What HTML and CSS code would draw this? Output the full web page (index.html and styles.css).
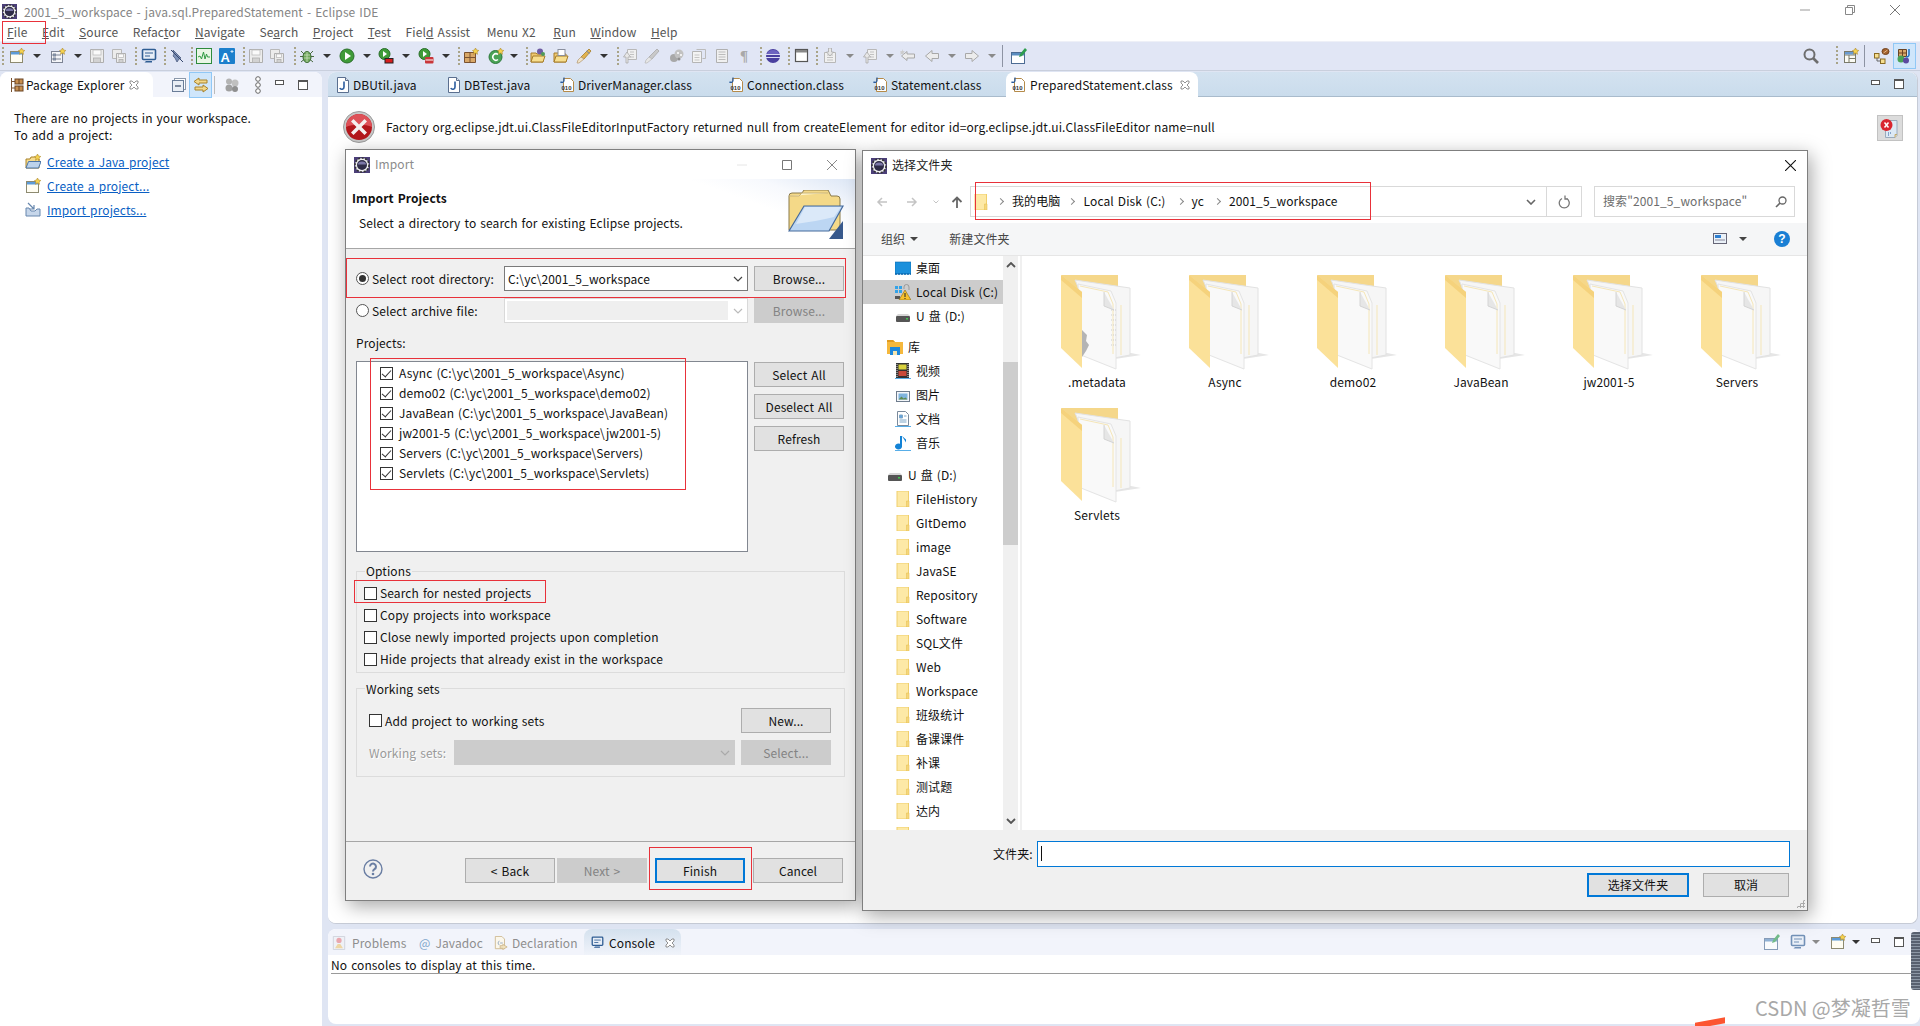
FILE: index.html
```html
<!DOCTYPE html>
<html lang="zh-CN">
<head>
<meta charset="utf-8">
<title>2001_5_workspace - java.sql.PreparedStatement - Eclipse IDE</title>
<link rel="stylesheet" href="styles.css">
</head>
<body>
<svg class="sprite" width="0" height="0">
<defs>
<symbol id="ecl" viewBox="0 0 16 16"><rect width="16" height="16" fill="#4b3f78"/><circle cx="8" cy="8" r="7" fill="#f0f0f0"/><circle cx="8" cy="8" r="7" fill="none" stroke="#333" stroke-width="1.6" stroke-dasharray="2 1.6"/><circle cx="8" cy="8" r="5" fill="#2f2c47"/><path d="M4 7.5a4 3 0 0 1 8 0z" fill="#7c78a8"/></symbol>
<symbol id="new" viewBox="0 0 16 16"><rect x="1.5" y="3.5" width="12" height="11" fill="#fffdf2" stroke="#8d8a70"/><rect x="2" y="4" width="11" height="2.5" fill="#5d9bd8"/><path d="M12.5 0l1 2 2.300.5-1.800 1.500.5 2.300-2-1.200-2 1.200.5-2.300L9.500 2.500 11.500 2z" fill="#f5d34f" stroke="#b08a2a" stroke-width=".6"/></symbol>
<symbol id="newcls" viewBox="0 0 16 16"><rect x="1.500" y="3.500" width="11" height="11" fill="#f4f5f8" stroke="#7d8494"/><path d="M3 6h3v2H3zM7 7h4M3 10h3v2H3zM7 11h4" fill="#8aa0c0" stroke="#7d8494"/><path d="M12.500 0l1 2 2.300.5-1.800 1.500.5 2.300-2-1.200-2 1.200.5-2.300L9.500 2.500 11.500 2z" fill="#f5d34f" stroke="#b08a2a" stroke-width=".6"/></symbol>
<symbol id="save" viewBox="0 0 16 16"><path d="M1.500 1.500h13v13h-13z" fill="#ececec" stroke="#aeaeae"/><rect x="4" y="2" width="8" height="5" fill="#fafafa" stroke="#bdbdbd" stroke-width=".8"/><rect x="4.500" y="10" width="7" height="4.500" fill="#d2d2d2" stroke="#aeaeae" stroke-width=".8"/></symbol>
<symbol id="saveall" viewBox="0 0 16 16"><path d="M1.500 1.500h9v9h-9z" fill="#ececec" stroke="#b8b8b8"/><path d="M5.500 5.500h9v9h-9z" fill="#ececec" stroke="#aeaeae"/><rect x="7.500" y="6" width="5" height="3.500" fill="#fafafa" stroke="#bdbdbd" stroke-width=".8"/><rect x="8" y="11.500" width="4" height="3" fill="#d2d2d2" stroke="#aeaeae" stroke-width=".8"/></symbol>
<symbol id="mon" viewBox="0 0 16 16"><rect x="1.500" y="1.500" width="13" height="10" rx="1" fill="#e7eef7" stroke="#2f5d93" stroke-width="1.600"/><path d="M4 5h8M4 8h5" stroke="#2f5d93"/><path d="M5 13h6v1.500H3.500z" fill="#2f5d93"/></symbol>
<symbol id="pin" viewBox="0 0 16 16"><path d="M4 2l8 8-2 1-2 3-2-4-2-2 1-2z" fill="#7d90b6" stroke="#4a5b7e" stroke-width=".8"/><path d="M2 2l12 12" stroke="#34466c"/></symbol>
<symbol id="w" viewBox="0 0 16 16"><rect x=".5" y=".5" width="15" height="15" fill="#eaf6e6" stroke="#2e8b3d"/><path d="M2 9l2-1 1.500 3L7.500 4l1.500 7 1.500-5 1 3H14" fill="none" stroke="#2e9a42"/></symbol>
<symbol id="a" viewBox="0 0 16 16"><rect width="16" height="16" rx="1" fill="#1c7fcc"/><text x="1.500" y="13.500" class="svgA">A</text><path d="M13 2v3M11.500 3.500h3" stroke="#cfe6f8"/></symbol>
<symbol id="bug" viewBox="0 0 16 16"><path d="M2 3l3 3M14 3l-3 3M1 8.500h3M15 8.500h-3M2 14l3-2.500M14 14l-3-2.500" stroke="#4a6a42"/><ellipse cx="8" cy="9" rx="4" ry="5.500" fill="#6fa85b" stroke="#3e6b37"/><path d="M8 4v10M5 7h6M5 10h6" stroke="#d7e6c8" stroke-width=".7"/></symbol>
<symbol id="run" viewBox="0 0 16 16"><circle cx="8" cy="8" r="7" fill="#3f9b38" stroke="#2a6f2a"/><path d="M6 4l6 4-6 4z" fill="#fff"/></symbol>
<symbol id="runx" viewBox="0 0 16 16"><circle cx="6.500" cy="6" r="5.500" fill="#3f9b38" stroke="#2a6f2a"/><path d="M5 3l4 3-4 3z" fill="#fff"/><rect x="7" y="10.500" width="8" height="4.500" fill="#d81e1e" stroke="#222"/></symbol>
<symbol id="runr" viewBox="0 0 16 16"><circle cx="6.500" cy="6" r="5.500" fill="#3f9b38" stroke="#2a6f2a"/><path d="M5 3l4 3-4 3z" fill="#fff"/><rect x="7" y="9" width="8.500" height="6.500" rx="1" fill="#c9363a"/><path d="M7.500 12h7.500" stroke="#fff"/></symbol>
<symbol id="pkg" viewBox="0 0 16 16"><path d="M1.500 4.500h11v10h-11z" fill="#d9a868" stroke="#7a5230"/><path d="M1.500 9.500h11M7 4.500v10" stroke="#7a5230"/><path d="M12.500 0l1 2 2.300.5-1.800 1.500.5 2.300-2-1.200-2 1.200.5-2.300L9.500 2.500 11.500 2z" fill="#f5d34f" stroke="#b08a2a" stroke-width=".6"/></symbol>
<symbol id="newg" viewBox="0 0 16 16"><circle cx="7.500" cy="9" r="6.500" fill="#4aa356" stroke="#2d7a3b"/><path d="M10 6.500a3.200 3.200 0 1 0 0 5" fill="none" stroke="#fff" stroke-width="1.500"/><path d="M12.500 0l1 2 2.300.5-1.800 1.500.5 2.300-2-1.200-2 1.200.5-2.300L9.500 2.500 11.500 2z" fill="#f5d34f" stroke="#b08a2a" stroke-width=".6"/></symbol>
<symbol id="fo1" viewBox="0 0 16 16"><path d="M1 5h5l1 1h6v8H1z" fill="#eec870" stroke="#a67d2a"/><path d="M1 14l2-6h12l-2 6z" fill="#f7de8e" stroke="#a67d2a"/><circle cx="10" cy="3.500" r="3" fill="#6e5ca3"/><circle cx="13" cy="6" r="2" fill="#4f9a5a"/></symbol>
<symbol id="fo2" viewBox="0 0 16 16"><path d="M1 5h5l1 1h6v8H1z" fill="#eec870" stroke="#a67d2a"/><path d="M1 14l2-6h12l-2 6z" fill="#f7de8e" stroke="#a67d2a"/><rect x="5" y="1.500" width="7" height="6" fill="#fff" stroke="#8a8f9e"/></symbol>
<symbol id="pen" viewBox="0 0 16 16"><path d="M13 1l2 2-7 8-3-2z" fill="#e2b34f" stroke="#a67d2a" stroke-width=".8"/><path d="M5 9l3 2-5 4H1l1-3z" fill="#f1e3c8" stroke="#b79e78" stroke-width=".8"/><path d="M10.500 3l3 2.500" stroke="#6d88b8"/></symbol>
<symbol id="peng" viewBox="0 0 16 16"><path d="M13 1l2 2-7 8-3-2z" fill="#c9c9c9" stroke="#a8a8a8" stroke-width=".8"/><path d="M5 9l3 2-5 4H1l1-3z" fill="#e6e6e6" stroke="#bdbdbd" stroke-width=".8"/></symbol>
<symbol id="blob" viewBox="0 0 16 16"><circle cx="5" cy="10" r="4" fill="#a8a8a8"/><circle cx="10" cy="6" r="4.500" fill="#c2c2c2"/><circle cx="9" cy="5" r="1" fill="#fff"/><circle cx="12" cy="7" r="1" fill="#fff"/><circle cx="10" cy="11" r="1.500" fill="#8f8f8f"/></symbol>
<symbol id="d1" viewBox="0 0 16 16"><path d="M1.500 3.500h9v11h-9z" fill="#f3f3f3" stroke="#b5b5b5"/><path d="M5.500 1.500h9v9h-3" fill="none" stroke="#bbb"/><path d="M3.500 7h5M3.500 9.500h5M3.500 12h5" stroke="#c5c5c5"/></symbol>
<symbol id="d2" viewBox="0 0 16 16"><path d="M2.500 1.500h11v13h-11z" fill="#f0f0f0" stroke="#b0b0b0"/><path d="M4.500 4h7M4.500 6.500h7M4.500 9h7M4.500 11.500h7" stroke="#bcbcbc"/></symbol>
<symbol id="globe" viewBox="0 0 16 16"><circle cx="8" cy="8" r="7" fill="#4a3f9f"/><path d="M1 6.500h14M1 9.500h14" stroke="#dcdcf4"/><path d="M2 6a6 4 0 0 1 12 0z" fill="#6d63c0"/></symbol>
<symbol id="win" viewBox="0 0 16 16"><rect x="1.500" y="1.500" width="12" height="12" fill="#fff" stroke="#555" stroke-width="1.200"/><rect x="2" y="2" width="11" height="2.500" fill="#888"/></symbol>
<symbol id="dn" viewBox="0 0 16 16"><path d="M2.500 4.500h11v10h-11z" fill="#f0f0f0" stroke="#b8b8b8"/><path d="M5 7h6M5 9.500h6M5 12h6" stroke="#c2c2c2"/><path d="M6.500 0h3v4h2L8 8 4.500 4h2z" fill="#e8e8e8" stroke="#aaa" stroke-width=".8"/></symbol>
<symbol id="upd" viewBox="0 0 16 16"><path d="M5.500 1.500h9v10h-9z" fill="#f0f0f0" stroke="#b8b8b8"/><path d="M8 4h4M8 6.500h4M8 9h4" stroke="#c2c2c2"/><path d="M4 15V9H1.500L5 4l3.500 5H6v6z" fill="#e8e8e8" stroke="#aaa" stroke-width=".8"/></symbol>
<symbol id="lastedit" viewBox="0 0 16 16"><path d="M7 3.500L1.500 8 7 12.500V10h7.500V6H7z" fill="#ececec" stroke="#a8a8a8"/><path d="M2 1l1 2 2 .5-1.500 1.200.4 2-1.900-1-1.700 1 .4-2L0 3.500 2 3z" fill="#ccc"/></symbol>
<symbol id="left" viewBox="0 0 16 16"><path d="M8 2.500L1.500 8 8 13.500V10.500h6.500v-5H8z" fill="#ececec" stroke="#a8a8a8"/></symbol>
<symbol id="right" viewBox="0 0 16 16"><path d="M8 2.500L14.500 8 8 13.500V10.500H1.500v-5H8z" fill="#ececec" stroke="#a8a8a8"/></symbol>
<symbol id="pinned" viewBox="0 0 16 16"><rect x=".5" y="4.500" width="13" height="11" fill="#fff" stroke="#4d6c94"/><rect x="1" y="5" width="12" height="2.500" fill="#5b8dc0"/><path d="M14 0l2 2-5 6-3 1 1-3z" fill="#2f9d4e"/></symbol>
<symbol id="search" viewBox="0 0 16 16"><circle cx="6.500" cy="6.500" r="5" fill="none" stroke="#6d6d6d" stroke-width="2"/><path d="M10 10l5 5" stroke="#6d6d6d" stroke-width="2.600"/></symbol>
<symbol id="persp" viewBox="0 0 16 16"><rect x="1.500" y="3.500" width="11" height="11" fill="#fbfbf4" stroke="#7a7a6a"/><path d="M1.500 7h11M6 7v7.500M6 10.500h6.500" stroke="#7a7a6a"/><rect x="2" y="4" width="10" height="2.500" fill="#6a9ad0"/><path d="M12.500 0l1 2 2.300.5-1.800 1.500.5 2.300-2-1.200-2 1.200.5-2.300L9.500 2.500 11.500 2z" fill="#f5d34f" stroke="#b08a2a" stroke-width=".6"/></symbol>
<symbol id="persp2" viewBox="0 0 16 16"><ellipse cx="11.500" cy="3.500" rx="3.500" ry="3" fill="#a5632f" stroke="#6f3f1b"/><path d="M9.500 5l4-3" stroke="#e0b98d"/><rect x=".5" y="5.500" width="4.500" height="4.500" fill="#f6de8f" stroke="#8a6a22"/><rect x="6.500" y="11" width="4.500" height="4.500" fill="#f6de8f" stroke="#8a6a22"/><path d="M3 10v3h3.500" fill="none" stroke="#666"/></symbol>
<symbol id="persp3" viewBox="0 0 16 16"><path d="M1.500 1.500h8v7h-8z" fill="#d9a868" stroke="#6a4424"/><path d="M1.500 5h8M5.500 1.500v7" stroke="#6a4424"/><circle cx="4" cy="11" r="3.500" fill="#4aa356"/><circle cx="9" cy="12.500" r="3" fill="#5b4aa0"/><path d="M12 1v6a2 2 0 0 1-3 1.500" fill="none" stroke="#1f6fbf" stroke-width="1.500"/></symbol>
<symbol id="pe" viewBox="0 0 16 16"><path d="M2.500 1v14M2.500 4.500H6M2.500 11H6" stroke="#7a5230"/><rect x="6" y="2" width="8" height="5" fill="#c88f4f" stroke="#6a4424"/><path d="M10 2v5" stroke="#6a4424"/><rect x="6" y="9" width="8" height="5" fill="#c88f4f" stroke="#6a4424"/><path d="M10 9v5" stroke="#6a4424"/></symbol>
<symbol id="tabx" viewBox="0 0 10 10"><path d="M1 1h2l2 2 2-2h2v2L7 5l2 2v2H7L5 7 3 9H1V7l2-2-2-2z" fill="#fff" stroke="#777" stroke-width=".8"/></symbol>
<symbol id="collapse" viewBox="0 0 16 16"><rect x="3.500" y="1.500" width="11" height="11" fill="#fff" stroke="#8b98aa"/><rect x="1.500" y="3.500" width="11" height="11" fill="#e9eef5" stroke="#6a7d98"/><path d="M4 9h6" stroke="#42536e" stroke-width="1.300"/></symbol>
<symbol id="link" viewBox="0 0 16 16"><path d="M6 1L1 4.500 6 8V6h8V3H6z" fill="#f3d88a" stroke="#a8822a"/><path d="M10 8l5 3.500-5 3.500v-2H2v-3h8z" fill="#f3d88a" stroke="#a8822a"/></symbol>
<symbol id="balls" viewBox="0 0 16 16"><circle cx="5" cy="11" r="3.500" fill="#a0a0a0"/><circle cx="11" cy="6" r="3.500" fill="#c0c0c0"/><circle cx="5" cy="4.500" r="3" fill="#b4b4b4"/><circle cx="11" cy="12" r="3" fill="#8f8f8f"/></symbol>
<symbol id="chain" viewBox="0 0 8 18"><circle cx="4" cy="3" r="2.300" fill="#fff" stroke="#666"/><circle cx="4" cy="9" r="2.300" fill="#fff" stroke="#666"/><circle cx="4" cy="15" r="2.300" fill="#fff" stroke="#666"/></symbol>
<symbol id="jf" viewBox="0 0 16 16"><path d="M2.500 .5h8l3 3v12h-11z" fill="#fff" stroke="#5a6f8f"/><path d="M10.500 .5v3h3" fill="#dde4ef" stroke="#5a6f8f"/><path d="M9 4.500V10a2.200 2.200 0 0 1-4.200 1" fill="none" stroke="#2b5c9e" stroke-width="1.600"/></symbol>
<symbol id="cf" viewBox="0 0 16 16"><path d="M3.500 1.500h7l3 3v10h-10z" fill="#fff" stroke="#b58b4a"/><path d="M4 .5v3a2 2 0 0 1-3.500 1.200" fill="none" stroke="#2b5c9e" stroke-width="1.300"/><text x="1.500" y="13" class="svgBin">010</text></symbol>
<symbol id="jp" viewBox="0 0 16 16"><path d="M1 14V5h4l1-2 7 0v2h1v9z" fill="#f6dc8e" stroke="#a8822a"/><path d="M1 14l2.500-6.500H16L13.500 14z" fill="#bcd3ec" stroke="#4c76a8"/><path d="M12.500 0l1 2 2.300.5-1.800 1.500.5 2.300-2-1.200-2 1.200.5-2.300L9.500 2.500 11.500 2z" fill="#f5d34f" stroke="#b08a2a" stroke-width=".6"/></symbol>
<symbol id="imp" viewBox="0 0 16 16"><path d="M1 6v8h14V7h-3L10 9H6L4 6z" fill="#c6d6ea" stroke="#6686ad"/><path d="M3 1l6 6M9 3v4H5" fill="none" stroke="#6686ad" stroke-width="1.200"/></symbol>
<symbol id="err" viewBox="0 0 32 32"><circle cx="16" cy="16" r="15.500" fill="#c8c8c8" stroke="#9c9c9c"/><circle cx="16" cy="16" r="13" fill="#b3171c"/><path d="M3 16a13 13 0 0 1 26 0c-6-3-20-3-26 0z" fill="#de5158"/><path d="M10.500 8L16 13.500 21.500 8 24 10.500 18.500 16 24 21.500 21.500 24 16 18.500 10.500 24 8 21.500 13.500 16 8 10.500z" fill="#f4efef"/></symbol>
<symbol id="errdoc" viewBox="0 0 20 20"><path d="M5.500 2.500H17v15l-2 2H5.500z" fill="#dce9f5" stroke="#9aaabb"/><path d="M15 19.500v-3h2" fill="#e8d6a8" stroke="#c3a96d"/><circle cx="6.500" cy="7" r="6" fill="#d9252f"/><path d="M4.500 4.500l4 5M8.500 4.500l-4 5" stroke="#fff" stroke-width="1.500"/><path d="M8 15h1M10 15h1M8 17h1" stroke="#2d5d9e"/></symbol>
<symbol id="help" viewBox="0 0 20 20"><circle cx="10" cy="10" r="9" fill="none" stroke="#6a7ea3" stroke-width="1.400"/><path d="M7 7.500a3 3 0 1 1 4.500 2.700c-1 .6-1.500 1.200-1.500 2.300" fill="none" stroke="#6a7ea3" stroke-width="2"/><circle cx="10" cy="15" r="1.300" fill="#6a7ea3"/></symbol>
<symbol id="wizf" viewBox="0 0 56 50"><path d="M1 6q0-3 3-3h10l2-3h24l3 6h6q3 0 3 3v31H1z" fill="#f4d988" stroke="#8a7a4a"/><path d="M1 6h10l3-3h26" fill="#fff6d0" stroke="#c9b37a"/><path d="M16 16h39L41 41H1z" fill="#bcd6f3" stroke="#456a9c" stroke-width="1.200"/><path d="M17 17h36L46 27C35 30 20 32 8 34z" fill="#dbe9f9"/><path d="M55 31v18H41z" fill="#38598c"/></symbol>
<symbol id="sf" viewBox="0 0 16 16"><path d="M2 0h11.500v16H2z" fill="#fde9a6" stroke="#f0cf6c"/><path d="M11.500 10h2.500v6h-2.500z" fill="#f5d67c" stroke="#e8c254" stroke-width=".6"/></symbol>
<symbol id="desk" viewBox="0 0 16 16"><rect width="16" height="12" y="2" fill="#1b90dc" stroke="#0d6ab0" stroke-width=".6"/><path d="M0 14h16" stroke="#0d6ab0" stroke-width="1.500" stroke-dasharray="2 1"/></symbol>
<symbol id="lock" viewBox="0 0 16 16"><rect x="0" y="2" width="3" height="3" fill="#33a3e8"/><rect x="4" y="2" width="3" height="3" fill="#33a3e8"/><rect x="0" y="6" width="3" height="3" fill="#33a3e8"/><rect x="4" y="6" width="3" height="3" fill="#33a3e8"/><path d="M9 5V3a2.500 2.500 0 0 1 5 0v3" fill="none" stroke="#999"/><rect x="0" y="12" width="5" height="3" fill="#555"/><path d="M10 6l6 10H4z" fill="#f6c12c" stroke="#8a6a10" stroke-width=".6"/><path d="M10 9v4M10 14v1" stroke="#222"/></symbol>
<symbol id="drv" viewBox="0 0 16 16"><rect x="1" y="8" width="14" height="6" rx="1" fill="#555"/><path d="M3 6h10l2 2H1z" fill="#d6d6d6"/><rect x="11" y="10" width="2" height="1.500" fill="#3ec94f"/></symbol>
<symbol id="lib" viewBox="0 0 16 16"><path d="M0 1h6l2 2h8v12H0z" fill="#f5b83d"/><path d="M0 1h6l2 2H0z" fill="#e09a1f"/><rect x="3" y="8" width="10" height="8" fill="#1e88dc"/><rect x="6" y="12" width="4" height="4" fill="#f5e6b0"/></symbol>
<symbol id="vid" viewBox="0 0 16 16"><rect x="1" y="0" width="13" height="15" fill="#333"/><rect x="3.500" y="1.500" width="8" height="5" fill="#d8d13c"/><rect x="3.500" y="8" width="8" height="5" fill="#c94a3a"/><path d="M2 1v13M13 1v13" stroke="#ddd" stroke-dasharray="1 1"/><path d="M0 15.500h16" stroke="#58aee8"/></symbol>
<symbol id="pic" viewBox="0 0 16 16"><rect x="1.500" y="4.500" width="13" height="10" fill="#f3f6fa" stroke="#6e7c8d"/><rect x="3.500" y="6.500" width="9" height="6" fill="#7fb4de"/><path d="M3.500 12.500l3-3 2 2 2-1 2 2z" fill="#5d8a4f"/></symbol>
<symbol id="docu" viewBox="0 0 16 16"><path d="M2.500 .5h8l3 3v11h-11z" fill="#fff" stroke="#7a8a9c"/><path d="M4.500 4h3v3h-3zM4.500 9h7M4.500 11h7M9 5h2.500" fill="#63a4dc" stroke="#7da6c8"/><path d="M0 15.500h16" stroke="#58aee8"/></symbol>
<symbol id="mus" viewBox="0 0 16 16"><path d="M7 1v10.500a3.500 3 0 1 1-2-2.700V1h2l4 3.500v3z" fill="#1383d6"/><path d="M0 15.500h16" stroke="#58aee8"/></symbol>
<symbol id="prob" viewBox="0 0 16 16"><path d="M1.500 .5h13v15h-13z" fill="#eef0f5" stroke="#b9bfca"/><circle cx="8" cy="5" r="3" fill="#e57f86"/><path d="M3.500 14l3-5h3l3 5z" fill="#edc778"/></symbol>
<symbol id="decl" viewBox="0 0 16 16"><path d="M1.500 .5H9l3 3v11H1.500z" fill="#fbf7ec" stroke="#cdb78e"/><path d="M6 5.500L4.500 8 6 10.500" fill="none" stroke="#8fa3bf"/><path d="M7 8h3" stroke="#8fa3bf"/><path d="M10 9.500l5 3-5 3v-1.500H7v-3h3z" fill="#f1e2bd" stroke="#cdb78e"/></symbol>
<symbol id="bf" viewBox="0 0 80 95"><path d="M1 0h56v16H1z" fill="#f5d78a"/><path d="M54 84l26-4-10-2-16 2z" fill="#e6e6e6"/><path d="M14 5l55 8v67l-21 4z" fill="#f6f6f6" stroke="#e2e2e2"/><path d="M60 30v50" stroke="#f5e6b8"/><path d="M17 9l33 7 5 12v66L20 80z" fill="#f9f9f9" stroke="#e4e4e4"/><path d="M19 11l28 6 5 12v50" fill="none" stroke="#f5e6b8"/><path d="M43 17v14l10 4" fill="#e6e6e6" stroke="#d4d4d4"/><path d="M0 0l21 17v76L0 73z" fill="#fbe199"/><path d="M0 0l21 17v6L0 5z" fill="#f5d27c"/></symbol>
<symbol id="bfm" viewBox="0 0 80 95"><use href="#bf" width="80" height="95"/><path d="M21 55l5 5-1 6 3 4-3 6-4 6z" fill="#b4b4b4"/><path d="M50 35h6M50 40h6M50 45h6M50 50h6M50 55h6M50 60h6M50 65h6M50 70h6" stroke="#cfcfcf" stroke-dasharray="1 1"/></symbol>
</defs>
</svg>

<header class="titlebar">
  <svg class="ic app"><use href="#ecl"/></svg>
  <span>2001_5_workspace - java.sql.PreparedStatement - Eclipse IDE</span>
  <div class="winctl">
    <svg class="wc" viewBox="0 0 10 10"><path d="M0 5h10" stroke="#999"/></svg>
    <svg class="wc" viewBox="0 0 10 10"><path d="M.5 2.500h7v7h-7zM2.500 2.500v-2h7v7h-2" fill="none" stroke="#888"/></svg>
    <svg class="wc" viewBox="0 0 10 10"><path d="M0 0l10 10M10 0L0 10" stroke="#777"/></svg>
  </div>
</header>

<nav class="menubar">
  <span><u>F</u>ile</span><span><u>E</u>dit</span><span><u>S</u>ource</span><span>Refac<u>t</u>or</span><span><u>N</u>avigate</span><span>Se<u>a</u>rch</span><span><u>P</u>roject</span><span><u>T</u>est</span><span class="m-field">Fiel<u>d</u> Assist</span><span class="m-x2">Menu X2</span><span><u>R</u>un</span><span class="m-win"><u>W</u>indow</span><span><u>H</u>elp</span>
</nav>

<div class="toolbar">
  <i class="sep s9"></i>
  <span class="tb w41"><svg class="ic"><use href="#new"/></svg><i class="dd"></i></span>
  <span class="tb w39"><svg class="ic"><use href="#newcls"/></svg><i class="dd"></i></span>
  <span class="tb w22"><svg class="ic"><use href="#save"/></svg></span>
  <span class="tb w22"><svg class="ic"><use href="#saveall"/></svg></span>
  <i class="sep s8"></i>
  <span class="tb w21"><svg class="ic"><use href="#mon"/></svg></span>
  <i class="sep s7"></i>
  <span class="tb w20"><svg class="ic"><use href="#pin"/></svg></span>
  <i class="sep s7"></i>
  <span class="tb w23"><svg class="ic"><use href="#w"/></svg></span>
  <span class="tb w22"><svg class="ic"><use href="#a"/></svg></span>
  <i class="sep s7"></i>
  <span class="tb w21"><svg class="ic"><use href="#save"/></svg></span>
  <span class="tb w23"><svg class="ic"><use href="#saveall"/></svg></span>
  <i class="sep s7"></i>
  <span class="tb w40"><svg class="ic"><use href="#bug"/></svg><i class="dd"></i></span>
  <span class="tb w39"><svg class="ic"><use href="#run"/></svg><i class="dd"></i></span>
  <span class="tb w40"><svg class="ic"><use href="#runx"/></svg><i class="dd"></i></span>
  <span class="tb w38"><svg class="ic"><use href="#runr"/></svg><i class="dd"></i></span>
  <i class="sep s7"></i>
  <span class="tb w25"><svg class="ic"><use href="#pkg"/></svg></span>
  <span class="tb w36"><svg class="ic"><use href="#newg"/></svg><i class="dd dd-n"></i></span>
  <i class="sep s6"></i>
  <span class="tb w23"><svg class="ic"><use href="#fo1"/></svg></span>
  <span class="tb w23"><svg class="ic"><use href="#fo2"/></svg></span>
  <span class="tb w39"><svg class="ic"><use href="#pen"/></svg><i class="dd"></i></span>
  <i class="sep s7"></i>
  <span class="tb w22"><svg class="ic"><use href="#upd"/></svg></span>
  <span class="tb w25"><svg class="ic"><use href="#peng"/></svg></span>
  <span class="tb w22"><svg class="ic"><use href="#blob"/></svg></span>
  <span class="tb w23"><svg class="ic"><use href="#d1"/></svg></span>
  <span class="tb w25"><svg class="ic"><use href="#d2"/></svg></span>
  <span class="tb w19 pil">¶</span>
  <i class="sep s7"></i>
  <span class="tb w21"><svg class="ic"><use href="#globe"/></svg></span>
  <i class="sep s8"></i>
  <span class="tb w20"><svg class="ic"><use href="#win"/></svg></span>
  <i class="sep s8"></i>
  <span class="tb w40"><svg class="ic"><use href="#dn"/></svg><i class="dd dd-g"></i></span>
  <span class="tb w38"><svg class="ic"><use href="#upd"/></svg><i class="dd dd-g"></i></span>
  <span class="tb w24"><svg class="ic"><use href="#lastedit"/></svg></span>
  <span class="tb w40"><svg class="ic"><use href="#left"/></svg><i class="dd dd-g"></i></span>
  <span class="tb w38"><svg class="ic"><use href="#right"/></svg><i class="dd dd-g"></i></span>
  <i class="vline"></i>
  <span class="tb w22"><svg class="ic"><use href="#pinned"/></svg></span>
  <div class="tb-right">
    <svg class="ic"><use href="#search"/></svg>
    <i class="sep s-r"></i>
    <svg class="ic"><use href="#persp"/></svg>
    <i class="vline v-r"></i>
    <svg class="ic"><use href="#persp2"/></svg>
    <span class="active-p"><svg class="ic"><use href="#persp3"/></svg></span>
  </div>
</div>

<main class="workbench">
  <section class="panel left">
    <div class="tabstrip light">
      <div class="tab active-left"><svg class="ic"><use href="#pe"/></svg><span>Package Explorer</span><svg class="tx"><use href="#tabx"/></svg></div>
      <div class="viewtools">
        <svg class="ic"><use href="#collapse"/></svg>
        <span class="linked"><svg class="ic"><use href="#link"/></svg></span>
        <i class="vt-sep"></i>
        <svg class="ic"><use href="#balls"/></svg>
        <svg class="chain"><use href="#chain"/></svg>
        <i class="minb"></i>
        <i class="maxb"></i>
      </div>
    </div>
    <div class="pe-body">
      <p class="pe-line">There are no projects in your workspace.</p>
      <p class="pe-line">To add a project:</p>
      <ul class="pe-links">
        <li><svg class="ic"><use href="#jp"/></svg><a>Create a Java project</a></li>
        <li><svg class="ic"><use href="#new"/></svg><a>Create a project...</a></li>
        <li><svg class="ic"><use href="#imp"/></svg><a>Import projects...</a></li>
      </ul>
    </div>
  </section>

  <div class="rightcol">
    <section class="panel editor">
      <div class="tabstrip blue">
        <div class="etab e1"><svg class="ic"><use href="#jf"/></svg><span>DBUtil.java</span></div>
        <div class="etab e2"><svg class="ic"><use href="#jf"/></svg><span>DBTest.java</span></div>
        <div class="etab e3"><svg class="ic"><use href="#cf"/></svg><span>DriverManager.class</span></div>
        <div class="etab e4"><svg class="ic"><use href="#cf"/></svg><span>Connection.class</span></div>
        <div class="etab e5"><svg class="ic"><use href="#cf"/></svg><span>Statement.class</span></div>
        <div class="etab active-e"><svg class="ic"><use href="#cf"/></svg><span>PreparedStatement.class</span><svg class="tx"><use href="#tabx"/></svg></div>
        <div class="viewtools vt-e"><i class="minb"></i><i class="maxb"></i></div>
      </div>
      <div class="editor-body">
        <svg class="erricon"><use href="#err"/></svg>
        <span class="errmsg">Factory org.eclipse.jdt.ui.ClassFileEditorInputFactory returned null from createElement for editor id=org.eclipse.jdt.ui.ClassFileEditor name=null</span>
        <span class="errbtn"><svg class="errdoc"><use href="#errdoc"/></svg></span>
      </div>
    </section>
    <section class="panel console">
      <div class="tabstrip light c-strip">
        <div class="ctab c1"><svg class="ic faded"><use href="#prob"/></svg><span>Problems</span></div>
        <div class="ctab c2"><span class="at">@</span><span>Javadoc</span></div>
        <div class="ctab c3"><svg class="ic"><use href="#decl"/></svg><span>Declaration</span></div>
        <div class="ctab active-c"><svg class="ic"><use href="#mon"/></svg><span>Console</span><svg class="tx"><use href="#tabx"/></svg></div>
        <div class="viewtools vt-c">
          <svg class="ic faded"><use href="#pinned"/></svg>
          <span class="cdrop"><svg class="ic faded"><use href="#mon"/></svg><i class="dd dd-g"></i></span>
          <span class="cdrop"><svg class="ic"><use href="#new"/></svg><i class="dd"></i></span>
          <i class="minb"></i><i class="maxb"></i>
        </div>
      </div>
      <div class="console-text">No consoles to display at this time.</div>
    </section>
  </div>
</main>

<div class="heap"></div>
<div class="watermark">CSDN @梦凝哲雪</div>
<div class="orange"></div>

<!-- Import dialog -->
<section class="win importw">
  <div class="wtitle">
    <svg class="ic"><use href="#ecl"/></svg><span class="wt-gray">Import</span>
    <div class="wctl">
      <svg class="wc2" viewBox="0 0 10 10"><path d="M0 5h10" stroke="#e6e6e6"/></svg>
      <svg class="wc2" viewBox="0 0 10 10"><path d="M.5 .5h9v9h-9z" fill="none" stroke="#777"/></svg>
      <svg class="wc2" viewBox="0 0 10 10"><path d="M0 0l10 10M10 0L0 10" stroke="#888"/></svg>
    </div>
  </div>
  <div class="wizhead">
    <div class="wiztext">
      <div class="wiz-t">Import Projects</div>
      <div class="wiz-s">Select a directory to search for existing Eclipse projects.</div>
    </div>
    <svg class="wizf"><use href="#wizf"/></svg>
  </div>
  <div class="wizbody">
    <div class="srcrow">
      <label class="radio-l"><i class="radio on"></i>Select root directory:</label>
      <div class="combo"><span>C:\yc\2001_5_workspace</span><svg class="chev" viewBox="0 0 10 6"><path d="M1 1l4 4 4-4" fill="none" stroke="#444" stroke-width="1.200"/></svg></div>
      <button class="btn">Browse...</button>
    </div>
    <div class="srcrow">
      <label class="radio-l"><i class="radio"></i>Select archive file:</label>
      <div class="combo dis"><i class="combo-in"></i><svg class="chev" viewBox="0 0 10 6"><path d="M1 1l4 4 4-4" fill="none" stroke="#bbb" stroke-width="1.200"/></svg></div>
      <button class="btn off">Browse...</button>
    </div>
    <div class="projl">Projects:</div>
    <div class="projgrid">
      <div class="plist">
        <div class="prow"><i class="cb ck"></i>Async (C:\yc\2001_5_workspace\Async)</div>
        <div class="prow"><i class="cb ck"></i>demo02 (C:\yc\2001_5_workspace\demo02)</div>
        <div class="prow"><i class="cb ck"></i>JavaBean (C:\yc\2001_5_workspace\JavaBean)</div>
        <div class="prow"><i class="cb ck"></i>jw2001-5 (C:\yc\2001_5_workspace\jw2001-5)</div>
        <div class="prow"><i class="cb ck"></i>Servers (C:\yc\2001_5_workspace\Servers)</div>
        <div class="prow"><i class="cb ck"></i>Servlets (C:\yc\2001_5_workspace\Servlets)</div>
      </div>
      <div class="pbtns">
        <button class="btn">Select All</button>
        <button class="btn">Deselect All</button>
        <button class="btn">Refresh</button>
      </div>
    </div>
    <div class="group g-opt">
      <span class="legend">Options</span>
      <div class="optrow"><i class="cb"></i>Search for nested projects</div>
      <div class="optrow"><i class="cb"></i>Copy projects into workspace</div>
      <div class="optrow"><i class="cb"></i>Close newly imported projects upon completion</div>
      <div class="optrow"><i class="cb"></i>Hide projects that already exist in the workspace</div>
    </div>
    <div class="group g-ws">
      <span class="legend">Working sets</span>
      <div class="wsrow"><div class="ws-add"><i class="cb"></i>Add project to working sets</div><button class="btn">New...</button></div>
      <div class="wsrow"><span class="ws-lab">Working sets:</span><div class="combo gray"><svg class="chev" viewBox="0 0 10 6"><path d="M1 1l4 4 4-4" fill="none" stroke="#aaa" stroke-width="1.200"/></svg></div><button class="btn off">Select...</button></div>
    </div>
  </div>
  <div class="wizfoot">
    <svg class="helpi"><use href="#help"/></svg>
    <div class="wf-btns">
      <button class="btn">&lt; Back</button>
      <button class="btn off">Next &gt;</button>
      <button class="btn def finish">Finish</button>
      <button class="btn cancel">Cancel</button>
    </div>
  </div>
</section>

<!-- Folder picker -->
<section class="win filew">
  <div class="ftitle"><svg class="ic"><use href="#ecl"/></svg><span>选择文件夹</span>
    <svg class="fclose" viewBox="0 0 10 10"><path d="M0 0l10 10M10 0L0 10" stroke="#111"/></svg>
  </div>
  <div class="fnav">
    <svg class="na n-back" viewBox="0 0 12 12"><path d="M11 6H2M6 2L2 6l4 4" fill="none" stroke="#c4c4c4" stroke-width="1.500"/></svg>
    <svg class="na n-fwd" viewBox="0 0 12 12"><path d="M1 6h9M6 2l4 4-4 4" fill="none" stroke="#c4c4c4" stroke-width="1.500"/></svg>
    <svg class="n-dn" viewBox="0 0 6 4"><path d="M.5 .5L3 3 5.500 .5" fill="none" stroke="#c4c4c4"/></svg>
    <svg class="na n-up" viewBox="0 0 12 12"><path d="M6 12V2M1.500 6L6 1.500 10.500 6" fill="none" stroke="#666" stroke-width="1.800"/></svg>
    <div class="addr">
      <div class="crumbs">
        <svg class="ic"><use href="#sf"/></svg>
        <i class="crumb"></i><span>我的电脑</span><i class="crumb"></i><span>Local Disk (C:)</span><i class="crumb cr-y"></i><span>yc</span><i class="crumb cr-w"></i><span>2001_5_workspace</span>
      </div>
      <svg class="addr-chev" viewBox="0 0 10 6"><path d="M1 1l4 4 4-4" fill="none" stroke="#666" stroke-width="1.600"/></svg>
      <div class="addr-ref"><svg viewBox="0 0 12 14" class="refi"><path d="M4 3.500A5 5 0 1 0 8.500 3.500M7 .5v3.500H10" fill="none" stroke="#777" stroke-width="1.300"/></svg></div>
    </div>
    <div class="fsearch"><span>搜索"2001_5_workspace"</span><svg class="smag" viewBox="0 0 12 12"><circle cx="7.500" cy="4.500" r="3.500" fill="none" stroke="#666" stroke-width="1.300"/><path d="M5 7l-4 4" stroke="#666" stroke-width="1.600"/></svg></div>
  </div>
  <div class="ftool">
    <span class="ft-org">组织</span><i class="dd ft-dd"></i><span class="ft-new">新建文件夹</span>
    <div class="ft-right">
      <svg class="vw" viewBox="0 0 14 12"><rect x=".5" y=".5" width="13" height="10" fill="#eaf1f8" stroke="#667"/><rect x="2" y="2" width="6" height="3" fill="#2f7fd0"/><path d="M2 7h10" stroke="#889"/></svg>
      <i class="dd ft-dd2"></i>
      <span class="fhelp">?</span>
    </div>
  </div>
  <div class="fmain">
    <div class="tree">
      <div class="tr l2"><svg class="ic"><use href="#desk"/></svg>桌面</div>
      <div class="tr l2 sel"><svg class="ic"><use href="#lock"/></svg>Local Disk (C:)</div>
      <div class="tr l2"><svg class="ic"><use href="#drv"/></svg>U 盘 (D:)</div>
      <div class="tr root r-lib"><svg class="ic"><use href="#lib"/></svg>库</div>
      <div class="tr l2"><svg class="ic"><use href="#vid"/></svg>视频</div>
      <div class="tr l2"><svg class="ic"><use href="#pic"/></svg>图片</div>
      <div class="tr l2"><svg class="ic"><use href="#docu"/></svg>文档</div>
      <div class="tr l2"><svg class="ic"><use href="#mus"/></svg>音乐</div>
      <div class="tr root r-u"><svg class="ic"><use href="#drv"/></svg>U 盘 (D:)</div>
      <div class="tr l2"><svg class="ic"><use href="#sf"/></svg>FileHistory</div>
      <div class="tr l2"><svg class="ic"><use href="#sf"/></svg>GItDemo</div>
      <div class="tr l2"><svg class="ic"><use href="#sf"/></svg>image</div>
      <div class="tr l2"><svg class="ic"><use href="#sf"/></svg>JavaSE</div>
      <div class="tr l2"><svg class="ic"><use href="#sf"/></svg>Repository</div>
      <div class="tr l2"><svg class="ic"><use href="#sf"/></svg>Software</div>
      <div class="tr l2"><svg class="ic"><use href="#sf"/></svg>SQL文件</div>
      <div class="tr l2"><svg class="ic"><use href="#sf"/></svg>Web</div>
      <div class="tr l2"><svg class="ic"><use href="#sf"/></svg>Workspace</div>
      <div class="tr l2"><svg class="ic"><use href="#sf"/></svg>班级统计</div>
      <div class="tr l2"><svg class="ic"><use href="#sf"/></svg>备课课件</div>
      <div class="tr l2"><svg class="ic"><use href="#sf"/></svg>补课</div>
      <div class="tr l2"><svg class="ic"><use href="#sf"/></svg>测试题</div>
      <div class="tr l2"><svg class="ic"><use href="#sf"/></svg>达内</div>
      <div class="tr l2"><svg class="ic"><use href="#sf"/></svg></div>
    </div>
    <div class="fscroll">
      <svg class="sa" viewBox="0 0 10 6"><path d="M1 5l4-4 4 4" fill="none" stroke="#555" stroke-width="1.800"/></svg>
      <i class="thumb"></i>
      <svg class="sa sa-d" viewBox="0 0 10 6"><path d="M1 1l4 4 4-4" fill="none" stroke="#555" stroke-width="1.800"/></svg>
    </div>
    <div class="files">
      <div class="file"><svg class="bf"><use href="#bfm"/></svg><span>.metadata</span></div>
      <div class="file"><svg class="bf"><use href="#bf"/></svg><span>Async</span></div>
      <div class="file"><svg class="bf"><use href="#bf"/></svg><span>demo02</span></div>
      <div class="file"><svg class="bf"><use href="#bf"/></svg><span>JavaBean</span></div>
      <div class="file"><svg class="bf"><use href="#bf"/></svg><span>jw2001-5</span></div>
      <div class="file"><svg class="bf"><use href="#bf"/></svg><span>Servers</span></div>
      <div class="file"><svg class="bf"><use href="#bf"/></svg><span>Servlets</span></div>
    </div>
  </div>
  <div class="ffoot">
    <div class="ff-row"><span class="ff-lab">文件夹:</span><div class="ff-in"><i class="caret"></i></div></div>
    <div class="ff-btns"><button class="btn def pick">选择文件夹</button><button class="btn fcancel">取消</button></div>
    <i class="grip"></i>
  </div>
</section>

<!-- red annotation boxes drawn over the screenshot -->
<i class="mark m1"></i><i class="mark m2"></i><i class="mark m3"></i><i class="mark m4"></i><i class="mark m5"></i><i class="mark m6"></i>
</body>
</html>
```
FILE: styles.css
```css
*{box-sizing:border-box}
html,body{margin:0;padding:0}
body{width:1920px;height:1026px;overflow:hidden;position:relative;background:#dfe5f3;color:#111;font:12px/16px "Noto Sans CJK SC","Noto Sans",sans-serif;letter-spacing:.1px;word-spacing:1.2px;display:flex;flex-direction:column}
.sprite{position:absolute}
p,ul{margin:0;padding:0}
li{list-style:none}
i{display:block;font-style:normal}
.ic{width:16px;height:16px;flex:none;display:block}
.svgA{font:bold 13px "Liberation Sans",sans-serif;fill:#fff;letter-spacing:0}
.svgBin{font:bold 6px "Liberation Sans",sans-serif;fill:#333;letter-spacing:0}

.titlebar{height:20px;background:#fff;display:flex;align-items:center;padding:3px 0 0 2px;color:#858585;flex:none}
.titlebar .app{width:15px;height:15px;margin-right:7px}
.winctl{margin-left:auto;display:flex;gap:35px;padding-right:20px;margin-top:-3px}
.wc{width:10px;height:10px;display:block}

.menubar{height:21px;background:#fff;display:flex;align-items:center;padding:3px 0 0 7px;gap:14.5px;color:#555;flex:none}
.menubar u{text-underline-offset:1px}
.m-field{margin-right:2px}
.m-x2{margin-right:3px}

.toolbar{height:30px;background:#e1e6f5;border-top:1px solid #eef0f7;border-bottom:1px solid #c9cfdd;display:flex;align-items:center;flex:none;padding-right:4px}
.sep{height:18px;background:repeating-linear-gradient(#a9a488 0 2px,transparent 2px 4px) 2px 0/2px 100% no-repeat;flex:none}
.s9{width:9px}.s8{width:8px}.s7{width:7px}.s6{width:6px}
.tb{display:flex;align-items:center;flex:none;height:22px}
.w19{width:19px}.w20{width:20px}.w21{width:21px}.w22{width:22px}.w23{width:23px}.w24{width:24px}.w25{width:25px}.w36{width:36px}.w38{width:38px}.w39{width:39px}.w40{width:40px}.w41{width:41px}
.dd{width:0;height:0;border-left:4px solid transparent;border-right:4px solid transparent;border-top:4px solid #333;margin-left:8px;flex:none}
.dd-g{border-top-color:#8a8a8a}
.dd-n{margin-left:6px}
.pil{color:#a8a8a8;font:bold 15px "Liberation Serif",serif;padding-left:1px}
.vline{width:1px;height:22px;background:#8d93a3;margin-right:8px;flex:none}
.tb-right{margin-left:auto;display:flex;align-items:center}
.s-r{width:9px;margin-left:15px;height:20px}
.v-r{margin:0 9px 0 5px}
.active-p{width:23px;height:26px;background:#cfe6fb;border:1px solid #90c8f6;margin-left:3px;display:flex;align-items:center;justify-content:center}

.workbench{flex:1;display:flex;gap:6px;min-height:0;padding-top:1px}
.panel{background:#fff;display:flex;flex-direction:column;min-height:0}
.left{width:322px;border-radius:8px 8px 0 0}
.rightcol{width:1590px;display:flex;flex-direction:column;gap:5px;min-height:0}
.editor{height:852px;border-radius:8px;border:1px solid #c6cbd6;border-top:0;border-left:0}
.console{flex:1;border-radius:8px 8px 8px 8px;margin-bottom:2px;margin-right:-2px}

.tabstrip{height:25px;flex:none;display:flex;align-items:center;position:relative}
.tabstrip.light{background:#f2f4fb;border-radius:8px 8px 0 0}
.tabstrip.blue{background:linear-gradient(#d3e2f0,#cadcec);border-bottom:1px solid #a9bbcc;border-radius:8px 8px 0 0;padding-left:7px}
.tx{width:10px;height:10px;flex:none;display:block}
.active-left{width:153px;height:25px;background:#fff;border-radius:8px 8px 0 0;display:flex;align-items:center;padding-left:9px;flex:none}
.active-left .ic{margin-right:1px}
.active-left span{margin:0 5px 0 0}
.viewtools{display:flex;align-items:center;flex:1}
.viewtools>.ic:first-child{margin-left:18px}
.linked{width:23px;height:26px;background:#cfe6fb;border:1px solid #90c8f6;margin-left:2px;display:flex;align-items:center;justify-content:center}
.vt-sep{width:1px;height:18px;background:#bbb;margin:0 9px 0 2px}
.chain{width:8px;height:18px;margin-left:14px;flex:none}
.minb{width:9px;height:5px;border:1px solid #555;background:#fff;margin-left:13px;margin-bottom:4px;flex:none}
.maxb{width:10px;height:10px;border:1px solid #555;border-top-width:2px;background:#fff;margin-left:14px;flex:none}

.etab{display:flex;align-items:center;gap:2px;flex:none;height:24px;padding-top:1px}
.e1{width:111px}.e2{width:114px}.e3{width:169px}.e4{width:144px}.e5{width:133px}
.active-e{width:192px;height:25px;background:#fff;border-radius:8px 8px 0 0;padding:1px 0 0 5px;gap:3px;display:flex;align-items:center;flex:none;margin-top:1px}
.active-e span{margin-right:4px}
.vt-e{justify-content:flex-end;padding-right:13px}
.editor-body{flex:1;display:flex;align-items:flex-start;padding:14px 14px 0 15px;background:#fff;border-radius:0 0 8px 8px}
.erricon{width:32px;height:32px;flex:none;margin-right:11px}
.errmsg{margin-top:8px;white-space:nowrap}
.errbtn{margin-left:auto;width:26px;height:26px;background:#dcdcdc;border:1px solid #c2c2c2;margin-top:4px;display:flex;align-items:center;justify-content:center}
.errdoc{width:20px;height:20px;display:block}

.c-strip{height:26px}
.ctab{display:flex;align-items:center;color:#8e8e8e;flex:none;height:26px;padding-top:1px}
.ctab .ic{width:14px;height:14px}
.faded{opacity:.65}
.c1{width:90px;padding-left:4px;gap:6px}
.c2{width:76px;gap:5px;padding-left:1px}
.at{color:#7fa6cc}
.c3{width:91px;padding-left:0;gap:4px}
.active-c{width:97px;height:26px;background:linear-gradient(#d4e1ee,#f0f3fa);border-radius:8px 8px 0 0;display:flex;align-items:center;padding:1px 0 0 7px;gap:5px;flex:none;color:#111;margin-left:-1px}
.active-c .ic{width:13px;height:13px}
.active-c span{margin-right:5px}
.vt-c{justify-content:flex-end;padding-right:16px}
.viewtools.vt-c>.ic:first-child{margin:0}
.cdrop{display:flex;align-items:center;margin-left:10px}
.cdrop .dd{margin-left:6px}
.vt-c .minb{margin-left:11px}
.console-text{height:19px;margin:0 9px 0 3px;border-bottom:1px solid #9a9a9a;line-height:20px}

.heap{position:absolute;left:1911px;top:932px;width:9px;height:58px;background:repeating-linear-gradient(#58606f 0 2px,#8d97a5 2px 3px);border-radius:3px 0 0 3px}
.watermark{position:absolute;left:1755px;top:996px;font-size:20px;line-height:24px;color:#a8a8a8;white-space:nowrap;letter-spacing:0;word-spacing:0}
.orange{position:absolute;left:1695px;top:1020px;width:30px;height:6px;background:#fc5531;transform:skewY(-10deg)}

.win{position:absolute;background:#f0f0f0;border:1px solid #7f7f7f;box-shadow:3px 5px 18px rgba(0,0,0,.35);display:flex;flex-direction:column}
.importw{left:345px;top:149px;width:511px;height:752px}
.filew{left:862px;top:150px;width:946px;height:761px}

.wtitle{height:29px;background:#fff;display:flex;align-items:center;padding-left:8px;flex:none}
.wt-gray{color:#8c8c8c;margin:-2px 0 0 5px}
.wctl{margin-left:auto;display:flex;gap:35px;padding-right:18px}
.wc2{width:10px;height:10px;display:block}
.wizhead{height:70px;flex:none;background:linear-gradient(200deg,#dce6f5 0,#f7f9fd 14%,#fff 24%);border-bottom:1px solid #a6a6a6;display:flex;justify-content:space-between;padding:11px 11px 0 6px}
.wiz-t{font-weight:700;line-height:16px}
.wiz-s{margin:9px 0 0 7px}
.wizf{width:56px;height:50px;flex:none}
.wizbody{flex:1;padding:17px 10px 0 10px;display:flex;flex-direction:column;min-height:0}
.srcrow{display:grid;grid-template-columns:142px 244px 90px;column-gap:6px;height:25px;margin-bottom:7px;align-items:center}
.radio-l{display:flex;align-items:center;gap:3px;white-space:nowrap}
.radio{width:13px;height:13px;border-radius:50%;border:1px solid #555;background:#fff;flex:none;position:relative}
.radio.on::after{content:"";position:absolute;left:2px;top:2px;width:7px;height:7px;border-radius:50%;background:#333}
.combo{height:25px;background:#fff;border:1px solid #7a7a7a;display:flex;align-items:center;padding:0 4px 0 3px;justify-content:space-between}
.combo.dis{border-color:#d9d9d9}
.combo.gray{background:#ccc;border-color:#ccc;width:281px;flex:none;justify-content:flex-end}
.combo-in{width:221px;height:19px;background:#efefef;margin-left:-1px}
.chev{width:10px;height:6px;display:block;margin-right:0;flex:none}
.btn{width:90px;height:25px;background:#e1e1e1;border:1px solid #adadad;font:inherit;letter-spacing:inherit;word-spacing:inherit;color:#111;padding:0;display:flex;align-items:center;justify-content:center;flex:none}
.btn.off{background:#ccc;border-color:#ccc;color:#838383}
.btn.def{border:2px solid #0078d7}
.projl{margin-top:5px;height:16px}
.projgrid{display:grid;grid-template-columns:392px 90px;column-gap:6px;margin-top:10px;height:191px}
.plist{background:#fff;border:1px solid #828790;padding:1px 0 0 23px}
.prow{height:20px;display:flex;align-items:center;white-space:nowrap;gap:6px}
.cb{width:13px;height:13px;border:1px solid #333;background:#fff;flex:none;position:relative}
.cb.ck::after{content:"";position:absolute;left:3px;top:0;width:4px;height:8px;border:solid #333;border-width:0 1.500px 1.500px 0;transform:rotate(42deg)}
.pbtns{display:flex;flex-direction:column;gap:7px;padding-top:1px}
.group{position:relative;border:1px solid #dcdcdc;width:489px}
.legend{position:absolute;left:8px;top:-9px;background:#f0f0f0;padding:0 1px;line-height:16px}
.g-opt{height:102px;margin-top:19px;padding:10px 0 0 7px}
.optrow{height:22px;display:flex;align-items:center;gap:3px;white-space:nowrap}
.g-ws{height:89px;margin-top:15px;padding:19px 13px 0 12px}
.g-ws .legend{top:-8px}
.wsrow{display:flex;align-items:center;height:25px;margin-bottom:7px}
.ws-add{display:flex;align-items:center;gap:3px;flex:1}
.ws-lab{color:#9a9a9a;text-shadow:1px 1px 0 #fff;width:85px;flex:none}
.wsrow .combo{margin-right:6px}
.wizfoot{height:59px;flex:none;border-top:1px solid #a6a6a6;display:flex;padding:16px 0 0 17px;position:relative}
.helpi{width:20px;height:20px;margin-top:1px;flex:none}
.wf-btns{display:flex;margin-left:auto;padding-right:12px}
.wf-btns .btn{margin-left:2px}
.wf-btns .finish{margin-left:8px}
.wf-btns .cancel{margin-left:8px}

.ftitle{height:29px;background:#fff;display:flex;align-items:center;gap:5px;padding-left:8px;flex:none;color:#222}
.ftitle span{margin-top:-2px}
.fclose{width:11px;height:11px;margin-left:auto;margin-right:11px}
.fnav{height:43px;background:#fff;display:flex;align-items:center;flex:none;padding:0 0 0 13px;position:relative}
.na{width:12px;height:12px;flex:none;display:block}
.n-fwd{margin-left:18px}
.n-dn{width:6px;height:4px;margin-left:15px;flex:none}
.n-up{margin-left:12px}
.addr{width:612px;height:31px;margin-left:7px;border:1px solid #d9d9d9;display:flex;align-items:center;flex:none;background:#fff}
.crumbs{display:flex;align-items:center;gap:9px;flex:1;padding-left:2px}
.crumbs span{margin-top:-2px}
.crumb{width:5px;height:5px;border:solid #888;border-width:1.500px 1.500px 0 0;transform:rotate(45deg);flex:none}
.cr-y{margin-left:3px}
.cr-w{margin-left:2px}
.addr-chev{width:10px;height:6px;margin-right:10px;flex:none}
.addr-ref{width:35px;height:29px;border-left:1px solid #d9d9d9;display:flex;align-items:center;justify-content:center}
.refi{width:12px;height:14px}
.fsearch{width:201px;height:31px;margin-left:12px;border:1px solid #d9d9d9;display:flex;align-items:center;justify-content:space-between;padding:0 7px 0 8px;color:#6d6d6d;flex:none}
.fsearch span{margin-top:-1px}
.smag{width:12px;height:12px}
.ftool{height:33px;background:#f5f6f7;border-bottom:1px solid #e6e6e6;display:flex;align-items:center;padding:0 0 0 18px;color:#444;flex:none}
.ft-dd{margin-left:5px;border-top-color:#444}
.ft-new{margin-left:31px}
.ft-right{margin-left:auto;display:flex;align-items:center;padding-right:17px}
.vw{width:14px;height:12px}
.ft-dd2{margin-left:12px;border-top-color:#444}
.fhelp{width:16px;height:16px;border-radius:50%;background:#1a7fd4;color:#fff;font:bold 12px/16px "Liberation Sans",sans-serif;text-align:center;margin-left:27px}
.fmain{height:574px;display:flex;background:#fff;flex:none}
.tree{width:140px;overflow:hidden;flex:none}
.tr{height:24px;display:flex;align-items:center;white-space:nowrap;color:#111}
.l2{padding-left:32px;gap:5px}
.sel{background:#ccc}
.root{padding-left:24px;gap:5px}
.r-lib{margin-top:7px}
.r-u{margin-top:8px}
.fscroll{width:15px;background:#f0f0f0;display:flex;flex-direction:column;align-items:center;position:relative;flex:none}
.sa{width:10px;height:6px;position:absolute;top:6px;left:3px}
.sa-d{top:auto;bottom:6px}
.thumb{position:absolute;left:0;top:106px;width:15px;height:183px;background:#cdcdcd}
.files{flex:1;margin-left:2px;border-left:2px solid #f0f0f0;padding:19px 0 0 11px;display:grid;grid-template-columns:repeat(6,128px);grid-auto-rows:133px;align-content:start}
.file{display:flex;flex-direction:column;align-items:center;position:relative}
.bf{width:80px;height:95px;display:block;flex:none;margin-left:8px}
.file span{margin-top:4px}
.ffoot{flex:1;display:flex;flex-direction:column;position:relative;padding-top:11px}
.ff-row{display:flex;align-items:center;height:26px;padding-left:130px}
.ff-lab{width:44px;flex:none}
.ff-in{width:753px;height:26px;background:#fff;border:1px solid #0078d7;padding:4px 0 0 3px}
.caret{width:1px;height:15px;background:#111}
.ff-btns{display:flex;justify-content:flex-end;margin-top:6px;padding-right:18px;gap:14px}
.pick{width:102px;height:24px}
.fcancel{width:86px;height:24px}
.grip{position:absolute;right:2px;bottom:2px;width:9px;height:9px;background:radial-gradient(circle,#aaa 1px,transparent 1.200px) 0 0/3px 3px;clip-path:polygon(100% 0,100% 100%,0 100%)}

.mark{position:absolute;border:1px solid #e8313a;pointer-events:none}
.m1{left:2px;top:21px;width:44px;height:23px}
.m2{left:975px;top:182px;width:396px;height:38px}
.m3{left:346px;top:258px;width:500px;height:40px}
.m4{left:370px;top:358px;width:316px;height:132px}
.m5{left:354px;top:580px;width:192px;height:23px}
.m6{left:649px;top:847px;width:103px;height:43px}

.pe-body{flex:1;padding:12px 0 0 14px;font-size:12px}
.pe-line{line-height:17px;height:17px;color:#111}
.pe-links{margin:7px 0 0 11px}
.pe-links li{height:24px;display:flex;align-items:center;gap:6px}
.pe-links a{color:#0a5fc4;text-decoration:underline}
```
